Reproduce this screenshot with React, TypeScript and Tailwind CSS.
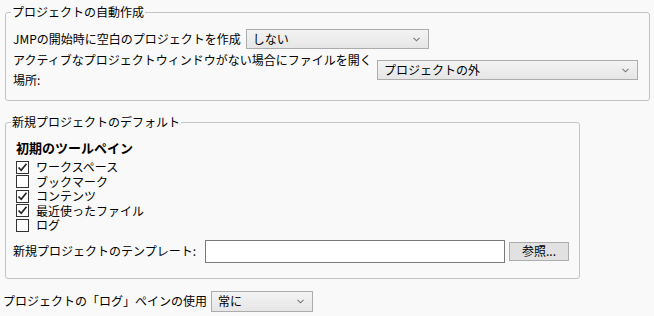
import type { ReactNode } from 'react';

const font = { fontFamily: '"Noto Sans CJK JP", "Noto Sans", sans-serif' };

function Chevron() {
  return (
    <svg width="7" height="5" viewBox="0 0 7 5" className="shrink-0">
      <polyline points="0.5,0.8 3.5,3.8 6.5,0.8" fill="none" stroke="#777" strokeWidth="1.1" />
    </svg>
  );
}

function Select({ value, className }: { value: string; className: string }) {
  return (
    <div
      className={`flex items-center justify-between border border-[#acacac] bg-gradient-to-b from-[#f3f3f3] to-[#e6e6e6] pl-[6px] pr-[8px] text-[12px] text-black ${className}`}
    >
      <span className="leading-none">{value}</span>
      <Chevron />
    </div>
  );
}

function Checkbox({ checked, label }: { checked: boolean; label: string }) {
  return (
    <div className="flex h-[14.5px] items-center gap-[7px]">
      <div className="flex h-[13px] w-[13px] shrink-0 items-center justify-center border border-[#333] bg-white">
        {checked && (
          <svg width="11" height="11" viewBox="0 0 11 11">
            <polyline points="1.5,5.5 4.2,8.3 9.5,1.8" fill="none" stroke="#222" strokeWidth="1.7" />
          </svg>
        )}
      </div>
      <span className="leading-[14px]">{label}</span>
    </div>
  );
}

function Group({ title, className, children }: { title: string; className: string; children: ReactNode }) {
  return (
    <fieldset className={`ml-[5px] rounded-[3px] border border-[#c3c3c3] ${className}`}>
      <legend className="ml-[5px] px-[1px] text-[12px] leading-[16px]">{title}</legend>
      {children}
    </fieldset>
  );
}

export default function App() {
  return (
    <div className="h-[316px] w-[654px] overflow-hidden bg-[#f9f9f9] text-[12px] text-black" style={font}>
      <Group title="プロジェクトの自動作成" className="mt-[4px] w-[645px] pb-[10px]">
        <div className="ml-[7px] mt-[9px] flex items-center gap-[5px]">
          <span>JMPの開始時に空白のプロジェクトを作成</span>
          <Select value="しない" className="h-[20px] w-[183px]" />
        </div>
        <div className="ml-[7px] mt-[1px] flex items-center">
          <span className="w-[362px] leading-[20px]">
            アクティブなプロジェクトウィンドウがない場合にファイルを開く場所:
          </span>
          <Select value="プロジェクトの外" className="ml-[2px] h-[20px] w-[261px]" />
        </div>
      </Group>

      <Group title="新規プロジェクトのデフォルト" className="mt-[13px] w-[575px] pb-[15px]">
        <div className="ml-[10px] mt-[10px] text-[13px] font-bold leading-[16px]">初期のツールペイン</div>
        <div className="ml-[10px] mt-[4px] flex flex-col">
          <Checkbox checked label="ワークスペース" />
          <Checkbox checked={false} label="ブックマーク" />
          <Checkbox checked label="コンテンツ" />
          <Checkbox checked label="最近使ったファイル" />
          <Checkbox checked={false} label="ログ" />
        </div>
        <div className="ml-[7px] mt-[7px] flex items-center">
          <span className="w-[192px]">新規プロジェクトのテンプレート:</span>
          <div className="h-[23px] w-[300px] border border-[#7a7a7a] bg-white" />
          <button className="ml-[4px] h-[19px] w-[60px] border border-[#adadad] bg-[#e1e1e1] text-[12px] leading-none">
            参照...
          </button>
        </div>
      </Group>

      <div className="ml-[3px] mt-[12px] flex items-center gap-[4px]">
        <span>プロジェクトの「ログ」ペインの使用</span>
        <Select value="常に" className="h-[21px] w-[102px]" />
      </div>
    </div>
  );
}
